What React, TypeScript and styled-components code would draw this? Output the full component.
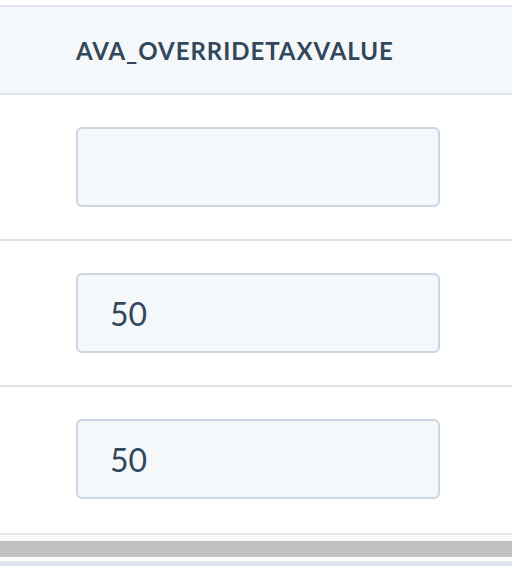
import React from "react";
import styled, { createGlobalStyle } from "styled-components";

const Global = createGlobalStyle`
  html, body { margin: 0; padding: 0; background: #ffffff; }
  body { font-family: Lato, "Open Sans", "Liberation Sans", sans-serif; }
`;

const Page = styled.div`
  width: 512px;
  height: 566px;
  overflow: hidden;
  padding-top: 5px;
  box-sizing: border-box;
`;

const HeaderRow = styled.div`
  height: 86px;
  border-top: 2px solid #dfe3eb;
  border-bottom: 2px solid #dfe3eb;
  background: #f5f8fa;
  display: flex;
  align-items: center;
  padding-left: 76px;
`;

const HeaderLabel = styled.span`
  font-family: Lato, "Liberation Sans", sans-serif;
  font-weight: 700;
  font-size: 24px;
  color: #33475b;
  letter-spacing: 0.95px;
  text-transform: uppercase;
`;

const Row = styled.div<{ $last?: boolean }>`
  padding: 32px 0 ${(p) => (p.$last ? "34px" : "32px")} 76px;
  border-bottom: ${(p) => (p.$last ? "none" : "2px solid #dfe3eb")};
`;

const Field = styled.input`
  display: block;
  box-sizing: border-box;
  width: 364px;
  height: 80px;
  border: 2px solid #cbd6e2;
  border-radius: 6px;
  background: #f5f8fa;
  padding: 0 0 0 32px;
  font-family: Lato, "Liberation Sans", sans-serif;
  font-size: 32px;
  color: #33475b;
  outline: none;
`;

const ScrollTrack = styled.div`
  height: 28px;
  border-top: 2px solid #e8e8e8;
  background: #fafafa;
  box-sizing: border-box;
  padding: 6px 0 4px;
`;

const ScrollThumb = styled.div`
  height: 16px;
  background: #c1c1c1;
`;

const Footer = styled.div`
  border-top: 1px solid #eaeaea;
  height: 4px;
  background: #dfe3eb;
`;

const values = ["", "50", "50"];

export default function App() {
  return (
    <>
      <Global />
      <Page>
        <HeaderRow>
          <HeaderLabel>AVA_OVERRIDETAXVALUE</HeaderLabel>
        </HeaderRow>
        {values.map((v, i) => (
          <Row key={i} $last={i === values.length - 1}>
            <Field readOnly value={v} />
          </Row>
        ))}
        <ScrollTrack>
          <ScrollThumb />
        </ScrollTrack>
        <Footer />
      </Page>
    </>
  );
}
